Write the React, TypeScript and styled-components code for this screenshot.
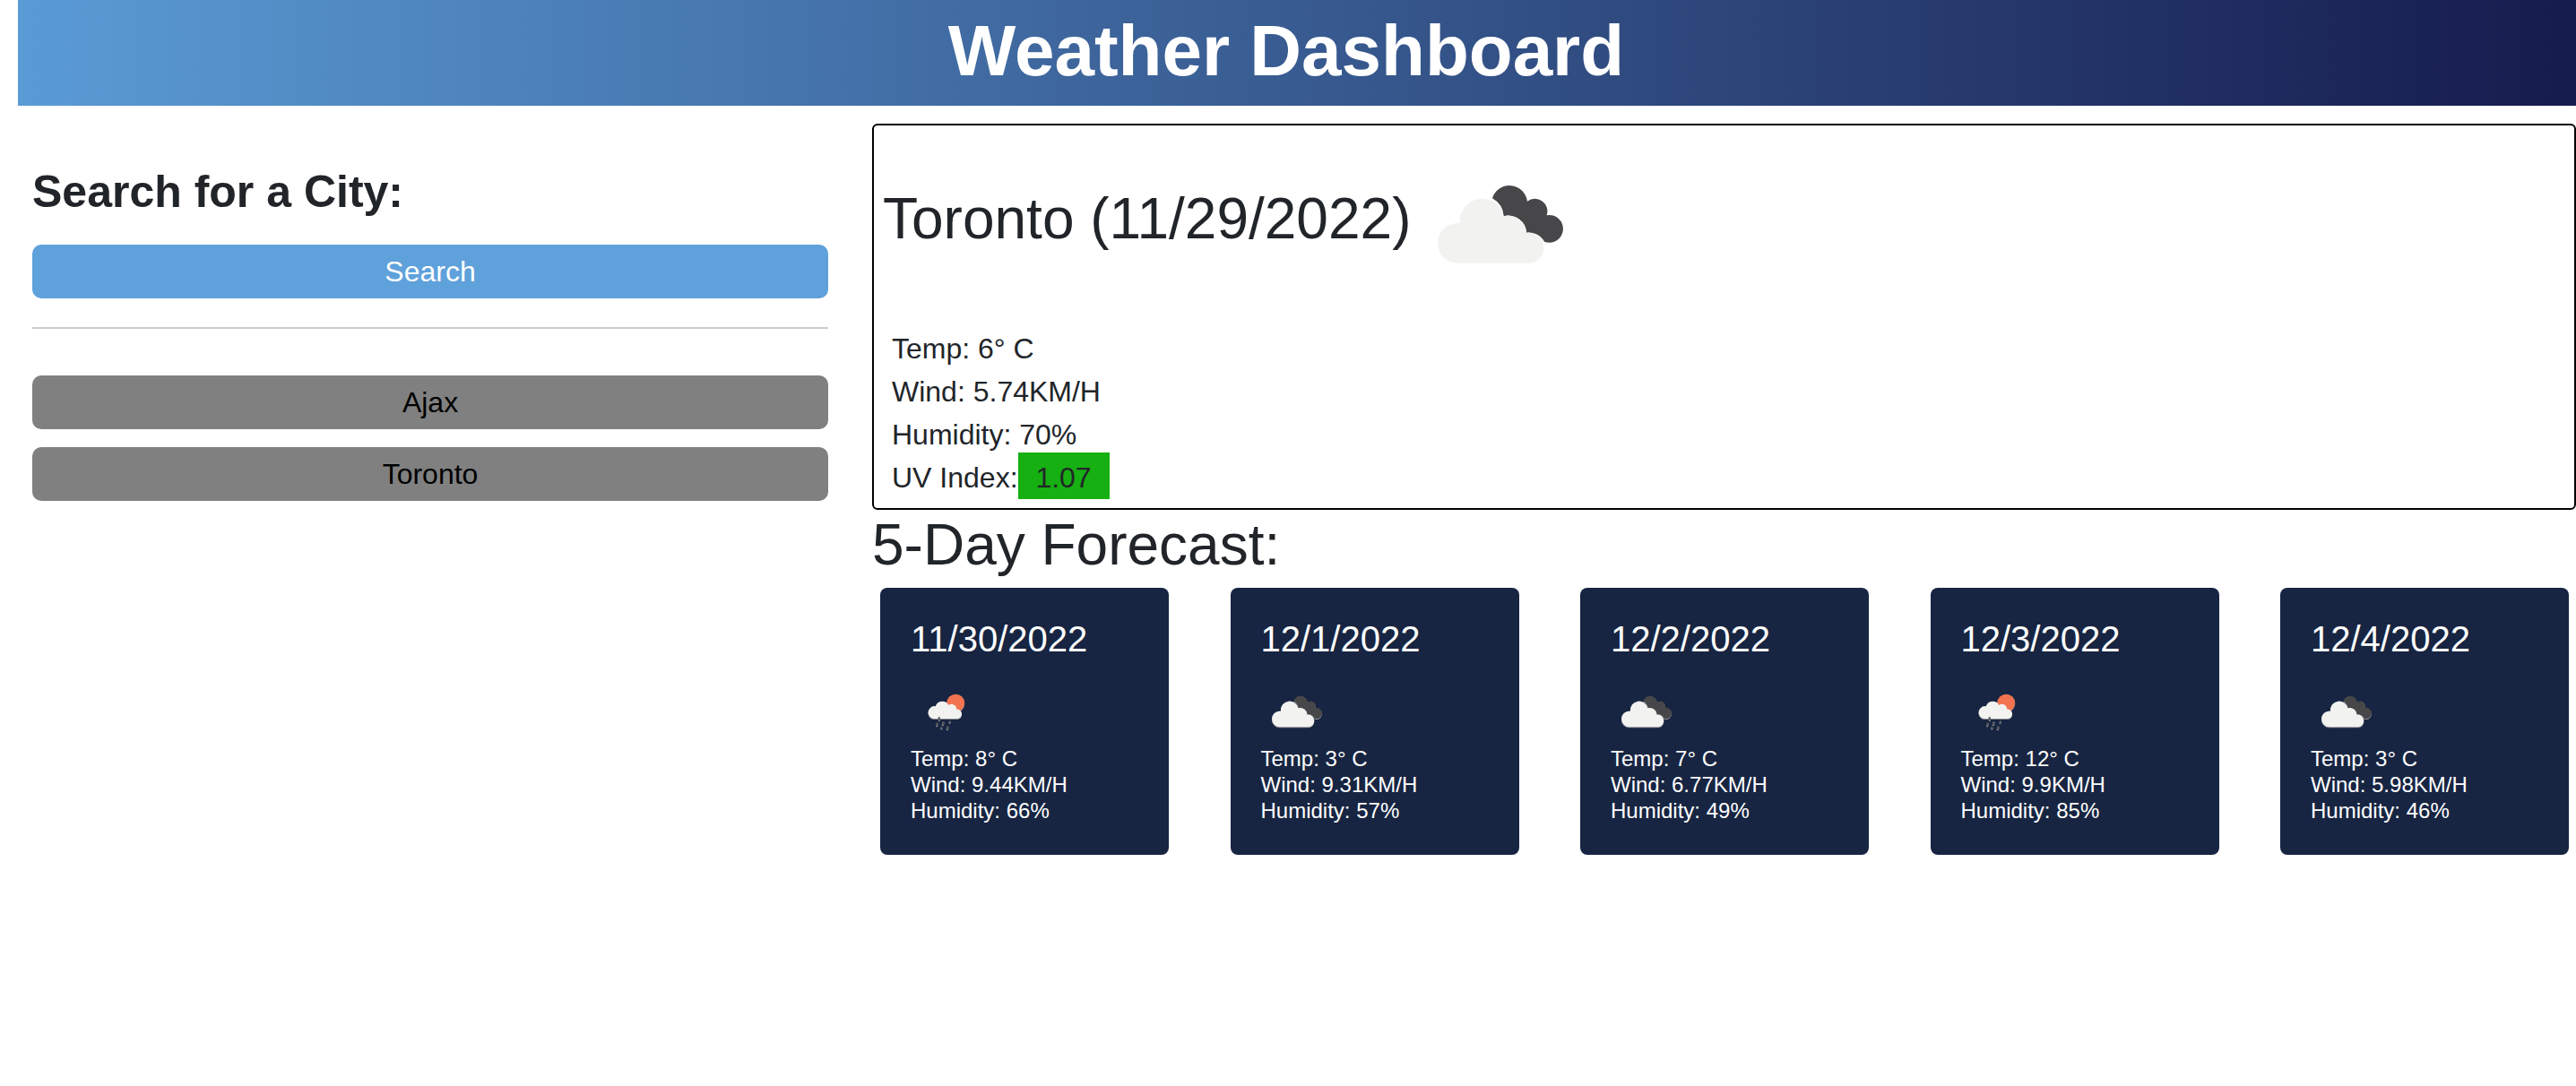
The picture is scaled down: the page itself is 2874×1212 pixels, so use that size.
import React from 'react';
import styled, { createGlobalStyle } from 'styled-components';

const GlobalStyle = createGlobalStyle`
	* {
		box-sizing: border-box;
	}
	body {
		margin: 0;
		background: white;
		color: #212529;
		font-family: 'Liberation Sans', Arial, sans-serif;
		font-size: 32px;
		line-height: 48px;
		overflow: hidden;
	}
`;

const Header = styled.header`
	margin-left: 20px;
	height: 118px;
	padding-right: 24px;
	background: linear-gradient(90deg, #5a9bd5 0%, #161b4d 100%);
	color: white;
	font-size: 80px;
	font-weight: 700;
	line-height: 113px;
	text-align: center;
`;

const Main = styled.main`
	display: flex;
`;

const Sidebar = styled.aside`
	flex: none;
	width: 888px;
	margin-left: 36px;
	padding-top: 66px;
`;

const SearchTitle = styled.h3`
	margin: 0 0 29px;
	font-size: 50px;
	font-weight: 700;
	line-height: 60px;
`;

const CityButton = styled.button<{ $primary?: boolean }>`
	display: block;
	width: 100%;
	height: 60px;
	margin-bottom: 20px;
	padding: 0;
	border: 0;
	border-radius: 10px;
	background: ${(p) => (p.$primary ? '#5fa1db' : '#808080')};
	color: ${(p) => (p.$primary ? 'white' : 'black')};
	font: inherit;
`;

const Divider = styled.hr`
	height: 2px;
	margin: 32px 0 52px;
	border: 0;
	background: #cccccc;
`;

const Content = styled.section`
	flex: 1;
	min-width: 0;
	margin: 20px 0 0 49px;
`;

const CurrentBox = styled.div`
	height: 431px;
	padding: 0 10px;
	border: 2px solid black;
	border-radius: 6px;
`;

const CurrentHead = styled.div`
	display: flex;
	align-items: center;
	gap: 25px;
	height: 208px;
	svg {
		margin-top: 12px;
	}
`;

const CityName = styled.h2`
	margin: 0;
	font-size: 64px;
	font-weight: 400;
	line-height: 77px;
`;

const Details = styled.div`
	padding: 17px 0 0 10px;
`;

const UvValue = styled.span`
	display: inline-block;
	width: 102px;
	height: 52px;
	margin-top: -4px;
	background: #16b012;
	line-height: 56px;
	text-align: center;
	vertical-align: top;
`;

const ForecastTitle = styled.h2`
	margin: 1px 0 0;
	font-size: 64px;
	font-weight: 400;
	line-height: 77px;
`;

const ForecastRow = styled.div`
	display: flex;
	justify-content: space-between;
	margin-top: 9px;
	padding: 0 8px 0 9px;
`;

const Card = styled.div`
	width: 322px;
	height: 298px;
	padding: 33px 34px 0;
	border-radius: 8px;
	background: #172542;
	color: white;
	font-size: 24px;
	line-height: 29px;
`;

const CardDate = styled.div`
	font-size: 40px;
	line-height: 48px;
`;

const CardIcon = styled.div<{ $indent: number; $top: number }>`
	height: 43px;
	margin: 36px 0 16px ${(p) => p.$indent}px;
	padding-top: ${(p) => p.$top}px;
	svg {
		display: block;
		filter: drop-shadow(0 1px 0 #8e9096);
	}
`;

const CLOUD_WHITE =
	'M142 342 A67 67 0 0 1 142 208 L150 208 A74 74 0 0 1 296 185 A60 60 0 0 1 372 240 A47 47 0 0 1 385 342 Z';
const CLOUD_DARK =
	'M258 125 A60 60 0 0 1 375 135 A42 42 0 0 1 440 182 A46 46 0 1 1 432 270 A60 60 0 0 0 372 240 A60 60 0 0 0 296 185 A74 74 0 0 0 258 125 Z';

const BrokenClouds: React.FC<{ scale: number }> = ({ scale }) => (
	<svg width={440 * scale} height={280 * scale} viewBox='60 70 440 280'>
		<path d={CLOUD_DARK} fill='#47474a' />
		<path d={CLOUD_WHITE} fill='#f2f2f0' />
	</svg>
);

const RainSun: React.FC = () => (
	<svg width={45} height={43} viewBox='100 70 135 130'>
		<circle cx='200' cy='105' r='30' fill='#f27350' />
		<path
			d='M125 158 A21 21 0 0 1 132 116 A24 24 0 0 1 176 112 A17 17 0 0 1 203 126 A16 16 0 0 1 206 158 Z'
			fill='#f2f2f0'
		/>
		<g fill='#55565a'>
			<rect x='141' y='152' width='6' height='12' />
			<rect x='134' y='171' width='6' height='12' transform='rotate(15 137 177)' />
			<rect x='154' y='167' width='7' height='12' transform='rotate(15 157 173)' />
			<rect x='177' y='164' width='6' height='8' transform='rotate(15 180 168)' />
			<rect x='149' y='185' width='6' height='7' />
			<rect x='169' y='183' width='7' height='11' transform='rotate(15 172 188)' />
		</g>
	</svg>
);

type Forecast = {
	date: string;
	rain: boolean;
	temp: number;
	wind: number;
	humidity: number;
};

const forecast: Forecast[] = [
	{ date: '11/30/2022', rain: true, temp: 8, wind: 9.44, humidity: 66 },
	{ date: '12/1/2022', rain: false, temp: 3, wind: 9.31, humidity: 57 },
	{ date: '12/2/2022', rain: false, temp: 7, wind: 6.77, humidity: 49 },
	{ date: '12/3/2022', rain: true, temp: 12, wind: 9.9, humidity: 85 },
	{ date: '12/4/2022', rain: false, temp: 3, wind: 5.98, humidity: 46 },
];

const App: React.FC = () => (
	<>
		<GlobalStyle />
		<Header>Weather Dashboard</Header>
		<Main>
			<Sidebar>
				<SearchTitle>Search for a City:</SearchTitle>
				<CityButton $primary>Search</CityButton>
				<Divider />
				<CityButton>Ajax</CityButton>
				<CityButton>Toronto</CityButton>
			</Sidebar>
			<Content>
				<CurrentBox>
					<CurrentHead>
						<CityName>Toronto (11/29/2022)</CityName>
						<BrokenClouds scale={1 / 3} />
					</CurrentHead>
					<Details>
						<div>Temp: 6° C</div>
						<div>Wind: 5.74KM/H</div>
						<div>Humidity: 70%</div>
						<div>
							UV Index:<UvValue>1.07</UvValue>
						</div>
					</Details>
				</CurrentBox>
				<ForecastTitle>5-Day Forecast:</ForecastTitle>
				<ForecastRow>
					{forecast.map((day) => (
						<Card key={day.date}>
							<CardDate>{day.date}</CardDate>
							<CardIcon $indent={day.rain ? 17 : 10} $top={day.rain ? 0 : 2}>
								{day.rain ? <RainSun /> : <BrokenClouds scale={0.4 / 3} />}
							</CardIcon>
							<div>Temp: {day.temp}° C</div>
							<div>Wind: {day.wind}KM/H</div>
							<div>Humidity: {day.humidity}%</div>
						</Card>
					))}
				</ForecastRow>
			</Content>
		</Main>
	</>
);

export default App;
